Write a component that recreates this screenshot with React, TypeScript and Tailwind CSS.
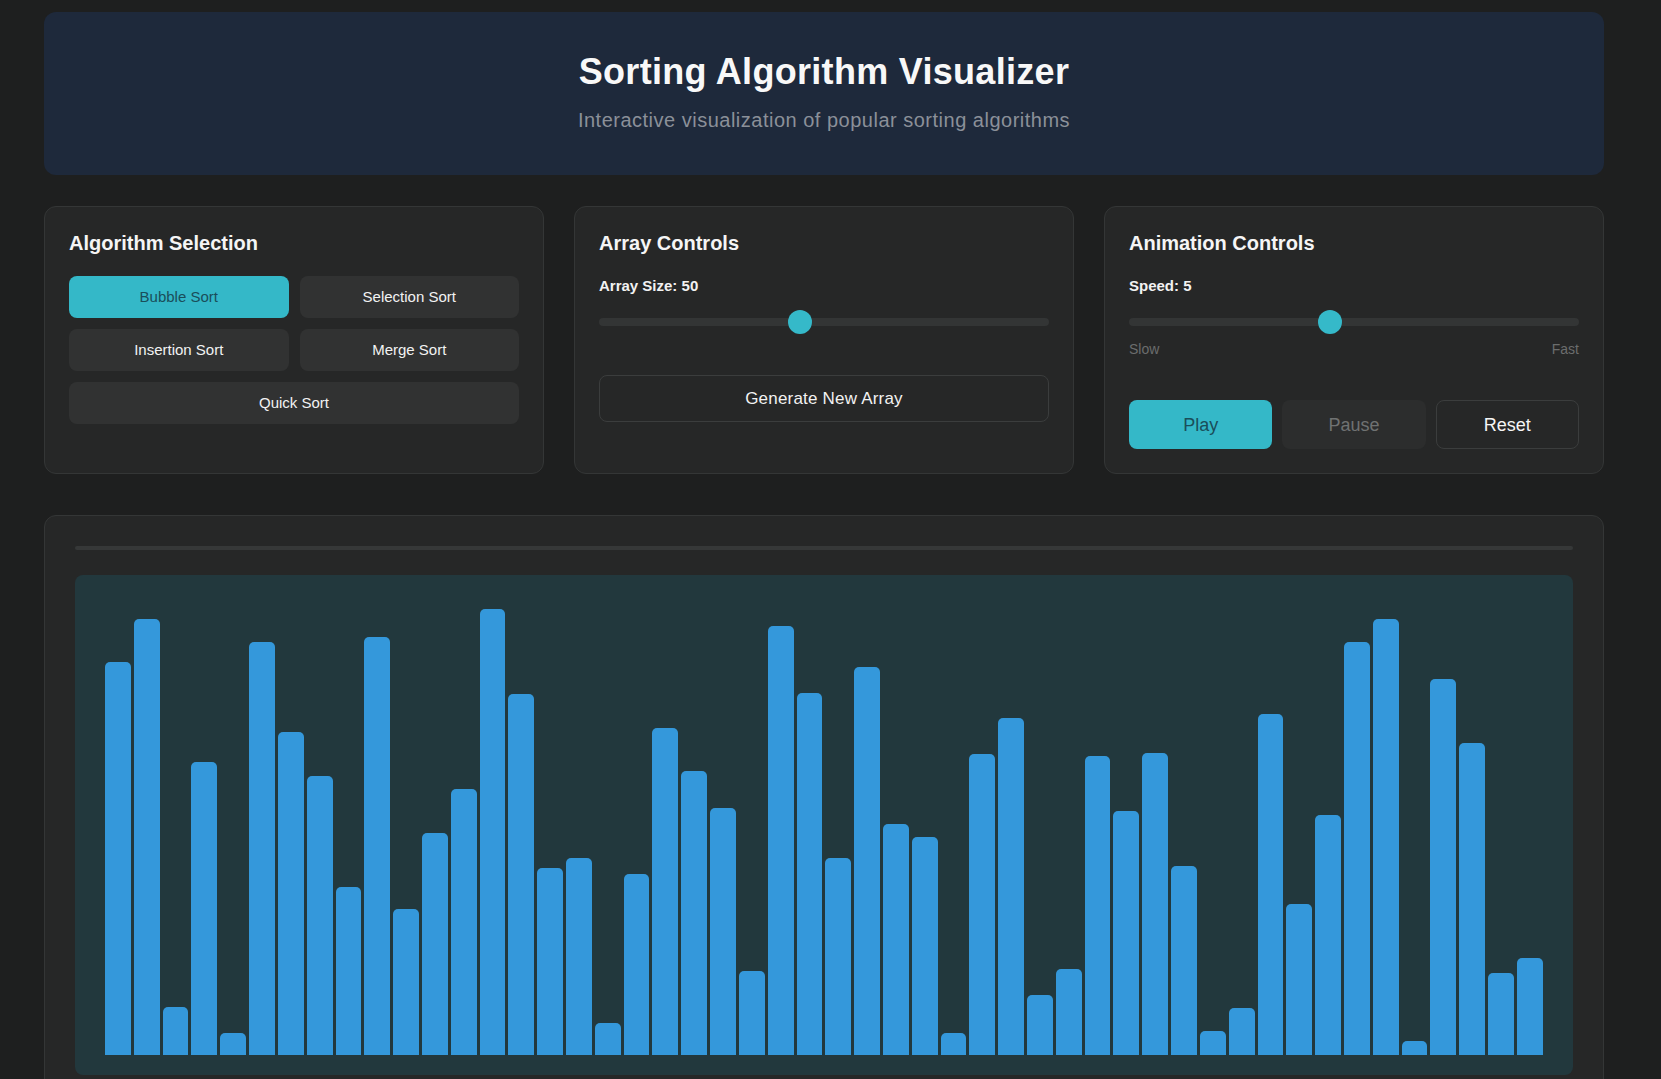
const bars = [
  393, 436, 48, 293, 22, 413, 323, 279, 168, 418, 146, 222, 266, 446, 361, 187, 197, 32, 181, 327,
  284, 247, 84, 429, 362, 197, 388, 231, 218, 22, 301, 337, 60, 86, 299, 244, 302, 189, 24, 47,
  341, 151, 240, 413, 436, 14, 376, 312, 82, 97,
];

const algorithms = ["Bubble Sort", "Selection Sort", "Insertion Sort", "Merge Sort"];

const Slider = ({ fraction }: { fraction: number }) => {
  return (
    <div className="relative mt-[14px] flex h-6 items-center">
      <div className="h-2 w-full rounded-full bg-[#333535]" />
      <div
        className="absolute top-0 h-6 w-6 rounded-full bg-[#35b9c9]"
        style={{ left: `calc(${fraction * 100}% - ${fraction * 24}px)` }}
      />
    </div>
  );
};

const Card = ({ title, children }: { title: string; children: React.ReactNode }) => {
  return (
    <div className="rounded-xl border border-[#343636] bg-[#262727] p-6">
      <h3 className="mb-[21px] text-xl leading-6 font-bold text-[#f5f5f5]">{title}</h3>
      {children}
    </div>
  );
};

export default function App() {
  return (
    <div
      className="min-h-screen bg-[#1e1f1f] pt-3 pr-[57px] pb-10 pl-[44px] text-white"
      style={{ fontFamily: '"Liberation Sans", Arial, sans-serif' }}
    >
      {/* header */}
      <header className="rounded-xl bg-[#1e293b] px-10 pt-10 pb-[41px] text-center">
        <h1 className="text-4xl font-bold tracking-[0.3px] text-[#f8f8f8]">
          Sorting Algorithm Visualizer
        </h1>
        <p className="mt-[14px] text-xl tracking-wide text-[#8b9099]">
          Interactive visualization of popular sorting algorithms
        </p>
      </header>

      {/* controls */}
      <div className="mt-[31px] grid grid-cols-3 gap-[30px]">
        <Card title="Algorithm Selection">
          <div className="grid grid-cols-2 gap-[11px]">
            {algorithms.map((name, i) => (
              <button
                key={name}
                className={
                  i === 0
                    ? "h-[42px] rounded-lg bg-[#34b8c8] text-[15px] text-[#1a4e5a]"
                    : "h-[42px] rounded-lg bg-[#313232] text-[15px] text-[#f2f2f2]"
                }
              >
                {name}
              </button>
            ))}
            <button className="col-span-2 h-[42px] rounded-lg bg-[#313232] text-[15px] text-[#f2f2f2]">
              Quick Sort
            </button>
          </div>
        </Card>

        <Card title="Array Controls">
          <div className="text-[15px] leading-5 font-bold text-[#f2f2f2]">Array Size: 50</div>
          <Slider fraction={40 / 90} />
          <button className="mt-[41px] h-[47px] w-full rounded-lg border border-[#3b3d3d] text-[17px] tracking-[0.2px] text-[#f2f2f2]">
            Generate New Array
          </button>
        </Card>

        <Card title="Animation Controls">
          <div className="text-[15px] leading-5 font-bold text-[#f2f2f2]">Speed: 5</div>
          <Slider fraction={4 / 9} />
          <div className="mt-[5px] flex justify-between text-sm text-[#6b6d6d]">
            <span>Slow</span>
            <span>Fast</span>
          </div>
          <div className="mt-[41px] grid grid-cols-3 gap-[10px]">
            <button className="h-[49px] rounded-lg bg-[#34b8c8] text-lg text-[#1a4e5a]">Play</button>
            <button className="h-[49px] rounded-lg bg-[#2c2d2d] text-lg text-[#707272]">Pause</button>
            <button className="h-[49px] rounded-lg border border-[#3b3d3d] text-lg text-[#f5f5f5]">
              Reset
            </button>
          </div>
        </Card>
      </div>

      {/* visualizer */}
      <div className="mt-[41px] rounded-xl border border-[#343636] bg-[#262727] p-[30px]">
        <div className="h-1 w-full rounded-full bg-[#363838]" />
        <div className="mt-[25px] flex h-[500px] items-end gap-[3px] rounded-lg bg-[#22383d] px-[30px] pb-5">
          {bars.map((h, i) => (
            <div key={i} className="flex-1 rounded-t-[5px] bg-[#3498db]" style={{ height: h }} />
          ))}
        </div>
      </div>
    </div>
  );
}
